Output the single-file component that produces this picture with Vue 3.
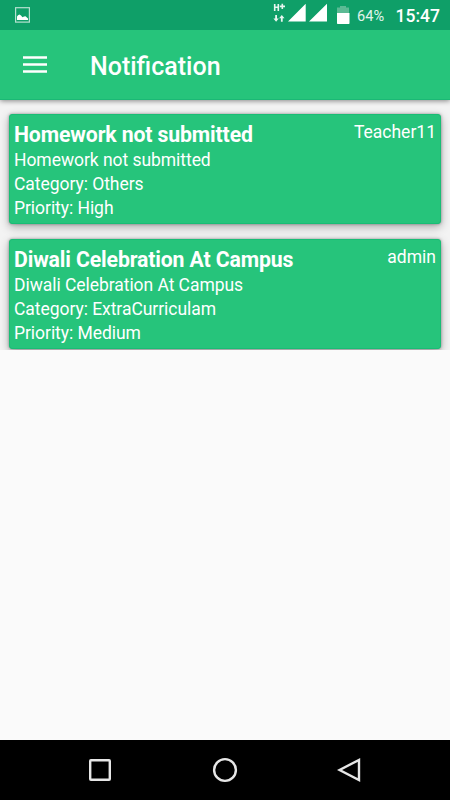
<script setup>
const notices = [
  { title: 'Homework not submitted', author: 'Teacher11', body: 'Homework not submitted', category: 'Others', priority: 'High' },
  { title: 'Diwali Celebration At Campus', author: 'admin', body: 'Diwali Celebration At Campus', category: 'ExtraCurriculam', priority: 'Medium' },
]
</script>

<template>
  <div class="screen">
    <div class="status">
      <svg class="picture" width="15" height="16" viewBox="0 0 15 16">
        <rect x=".6" y=".7" width="13.8" height="14.4" fill="none" stroke="#b5e1d0" stroke-width="1.2" />
        <path d="M2 13V9.5L3 8.3 4.5 7.5 6 8.5 7.5 10.2 9 9.5 10.5 9.3 13 11.5V13Z" fill="#fff" />
      </svg>
      <svg class="signals" width="82" height="24" viewBox="0 0 82 24">
        <g fill="none" stroke="#e8f6f0" stroke-width="1.6">
          <path d="M1.7 4V11M5.3 4V11M1.7 7.3H5.3M6.8 6.4H12M9.3 3.8V9" />
        </g>
        <path d="M2.2 15H4V18.5H5.8L3.1 21.8.4 18.5H2.2ZM7.9 21.8H9.7V18.2H11.5L8.8 15 6.1 18.2H7.9Z" fill="#e8f6f0" />
        <path d="M15 21.6L32.7 3.8V21.6ZM36 21.6L54 3.8V21.6Z" fill="#fff" />
        <path d="M64 13V7.5H67V6H73V7.5H76V13Z" fill="#5bba94" />
        <path d="M64 13H76.5V23.3Q76.5 24 75.8 24H64.7Q64 24 64 23.3Z" fill="#fff" />
      </svg>
      <span class="percent">64%</span>
      <span class="time">15:47</span>
    </div>
    <header class="toolbar">
      <svg class="menu" width="24" height="18" viewBox="0 0 24 18">
        <path d="M0 1.5H24M0 8.5H24M0 15.5H24" stroke="#fff" stroke-width="2.6" />
      </svg>
      <h1>Notification</h1>
    </header>
    <main>
      <div class="list">
        <article v-for="n in notices" :key="n.title" class="card">
          <div class="head">
            <h2>{{ n.title }}</h2>
            <span class="author">{{ n.author }}</span>
          </div>
          <p>{{ n.body }}</p>
          <p>Category: {{ n.category }}</p>
          <p>Priority: {{ n.priority }}</p>
        </article>
      </div>
    </main>
    <nav class="navbar">
      <svg width="26" height="26" viewBox="0 0 26 26"><rect x="3.2" y="3.2" width="19.6" height="19.6" rx=".7" /></svg>
      <svg width="26" height="26" viewBox="0 0 26 26"><circle cx="13" cy="13" r="10.9" /></svg>
      <svg width="26" height="26" viewBox="0 0 26 26"><path d="M22 2.9V23.1L2.6 13Z" /></svg>
    </nav>
  </div>
</template>

<style>
body { margin: 0; }
</style>

<style scoped>
.screen {
  width: 450px;
  height: 800px;
  display: flex;
  flex-direction: column;
  overflow: hidden;
  background: #fafafa;
  color: #fff;
  font-family: Roboto, sans-serif;
}
.status {
  position: relative;
  z-index: 2;
  height: 30px;
  flex: none;
  display: flex;
  align-items: flex-start;
  background: #0f9f68;
  white-space: nowrap;
}
.picture { margin: 7px 0 0 15px; }
.signals { margin-left: 243px; flex: none; }
.percent {
  margin-left: 2px;
  width: 38.5px;
  font-size: 14.6px;
  line-height: 32px;
  color: #e0f4ec;
}
.time { font-size: 17.5px; line-height: 32px; font-weight: 500; }
.toolbar {
  position: relative;
  z-index: 1;
  height: 70px;
  flex: none;
  display: flex;
  box-sizing: border-box;
  padding-left: 23px;
  background: #26c47b;
  border-bottom: 1px solid #1bb875;
  box-shadow: 0 1px 5px rgba(0, 0, 0, .45);
}
.menu { margin-top: 26px; }
h1 {
  margin: 0 0 0 43px;
  font-size: 25px;
  line-height: 73px;
  font-weight: 500;
}
main { flex: 1; }
.list {
  display: flex;
  flex-direction: column;
  gap: 15px;
  height: 250px;
  box-sizing: border-box;
  padding: 14px 9px 1px;
  overflow: hidden;
  background: #f3f3f3;
}
.card {
  height: 110px;
  flex: none;
  box-sizing: border-box;
  padding: 4px 4px 0;
  border: 1px solid #19bd75;
  border-radius: 3px;
  background: #26c47b;
  box-shadow: 0 0 3px rgba(0, 0, 0, .35), 0 3px 10px rgba(0, 0, 0, .3);
}
.head {
  display: flex;
  justify-content: space-between;
  height: 29px;
}
h2 {
  margin: 0;
  font-size: 21.25px;
  line-height: 32px;
  font-weight: 700;
  letter-spacing: -.14px;
}
.author { font-size: 17.5px; line-height: 27px; }
p {
  margin: 0;
  font-size: 17.5px;
  line-height: 24px;
  letter-spacing: -.05px;
}
.navbar {
  height: 60px;
  flex: none;
  display: flex;
  justify-content: center;
  align-items: center;
  gap: 99px;
  background: #000;
}
.navbar svg { fill: none; stroke: #e6e6e6; stroke-width: 2.4; }
</style>
